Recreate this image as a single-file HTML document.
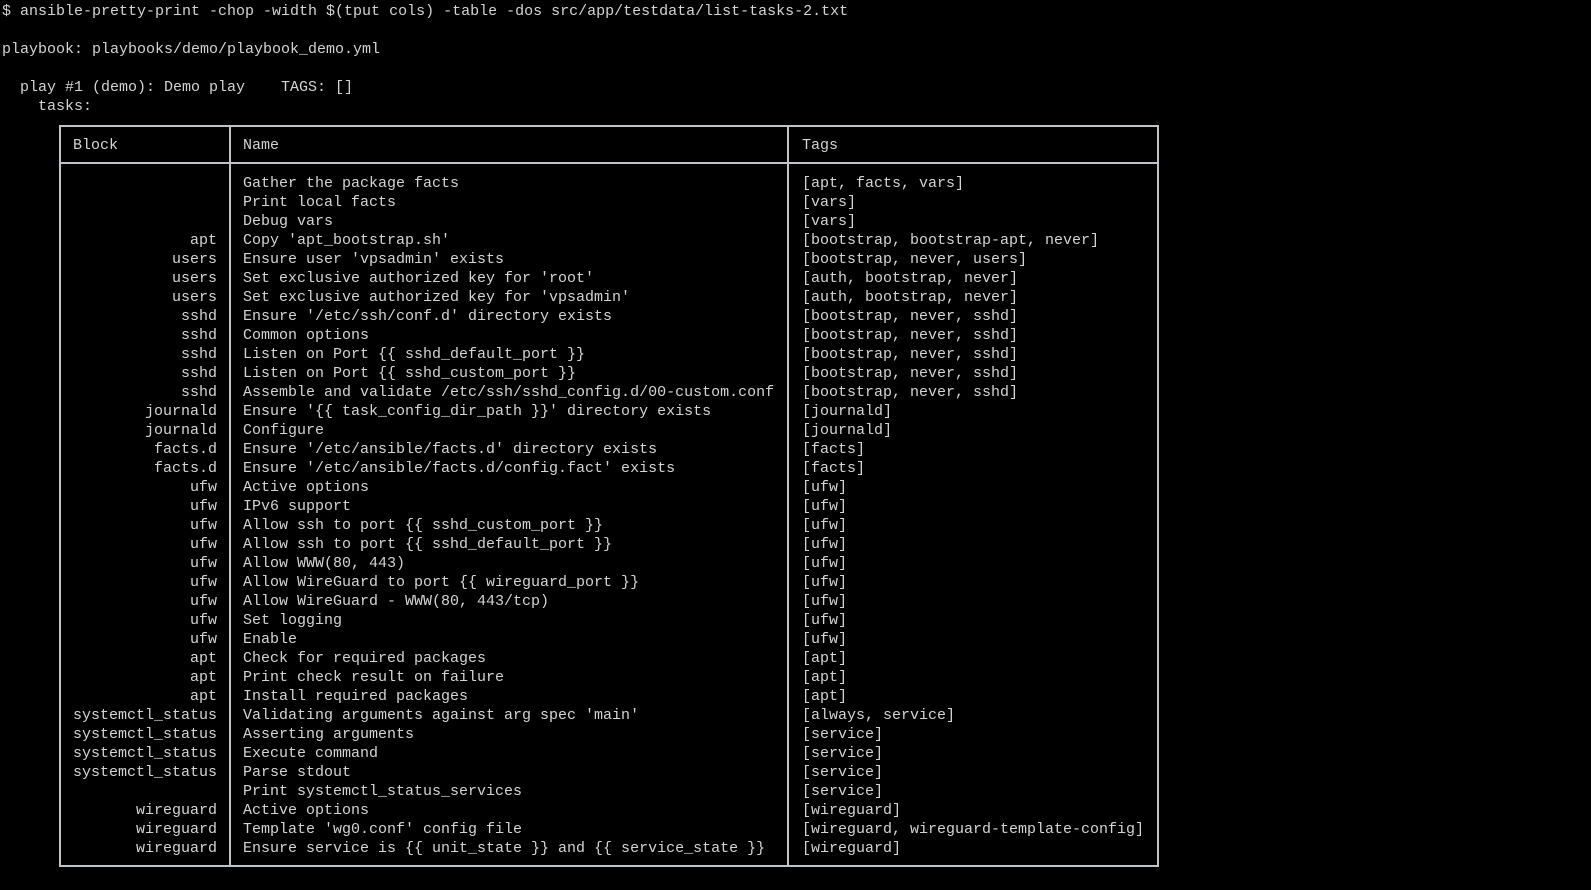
<!DOCTYPE html>
<html><head><meta charset="utf-8"><style>
html,body{margin:0;padding:0;background:#000;width:1591px;height:890px;overflow:hidden}
pre{position:absolute;margin:0;font-family:"Liberation Mono",monospace;font-size:15px;line-height:19px;color:#d4d4d4}
.b{position:absolute;background:#bfc4c8}
</style></head><body>
<pre style="left:2px;top:2px">$ ansible-pretty-print -chop -width $(tput cols) -table -dos src/app/testdata/list-tasks-2.txt

playbook: playbooks/demo/playbook_demo.yml

  play #1 (demo): Demo play    TAGS: []
    tasks:</pre>
<div class="b" style="left:59px;top:125px;width:1100px;height:2px"></div>
<div class="b" style="left:59px;top:162px;width:1100px;height:2px"></div>
<div class="b" style="left:59px;top:865px;width:1100px;height:2px"></div>
<div class="b" style="left:59px;top:125px;width:2px;height:742px"></div>
<div class="b" style="left:229px;top:125px;width:2px;height:742px"></div>
<div class="b" style="left:787px;top:125px;width:2px;height:742px"></div>
<div class="b" style="left:1157px;top:125px;width:2px;height:742px"></div>
<pre style="left:73px;top:136px">Block</pre>
<pre style="left:243px;top:136px">Name</pre>
<pre style="left:802px;top:136px">Tags</pre>
<pre style="left:61px;width:156px;text-align:right;top:174px">

 
 
apt
users
users
users
sshd
sshd
sshd
sshd
sshd
journald
journald
facts.d
facts.d
ufw
ufw
ufw
ufw
ufw
ufw
ufw
ufw
ufw
apt
apt
apt
systemctl_status
systemctl_status
systemctl_status
systemctl_status
 
wireguard
wireguard
wireguard</pre>
<pre style="left:243px;top:174px">Gather the package facts
Print local facts
Debug vars
Copy 'apt_bootstrap.sh'
Ensure user 'vpsadmin' exists
Set exclusive authorized key for 'root'
Set exclusive authorized key for 'vpsadmin'
Ensure '/etc/ssh/conf.d' directory exists
Common options
Listen on Port {{ sshd_default_port }}
Listen on Port {{ sshd_custom_port }}
Assemble and validate /etc/ssh/sshd_config.d/00-custom.conf
Ensure '{{ task_config_dir_path }}' directory exists
Configure
Ensure '/etc/ansible/facts.d' directory exists
Ensure '/etc/ansible/facts.d/config.fact' exists
Active options
IPv6 support
Allow ssh to port {{ sshd_custom_port }}
Allow ssh to port {{ sshd_default_port }}
Allow WWW(80, 443)
Allow WireGuard to port {{ wireguard_port }}
Allow WireGuard - WWW(80, 443/tcp)
Set logging
Enable
Check for required packages
Print check result on failure
Install required packages
Validating arguments against arg spec 'main'
Asserting arguments
Execute command
Parse stdout
Print systemctl_status_services
Active options
Template 'wg0.conf' config file
Ensure service is {{ unit_state }} and {{ service_state }}</pre>
<pre style="left:802px;top:174px">[apt, facts, vars]
[vars]
[vars]
[bootstrap, bootstrap-apt, never]
[bootstrap, never, users]
[auth, bootstrap, never]
[auth, bootstrap, never]
[bootstrap, never, sshd]
[bootstrap, never, sshd]
[bootstrap, never, sshd]
[bootstrap, never, sshd]
[bootstrap, never, sshd]
[journald]
[journald]
[facts]
[facts]
[ufw]
[ufw]
[ufw]
[ufw]
[ufw]
[ufw]
[ufw]
[ufw]
[ufw]
[apt]
[apt]
[apt]
[always, service]
[service]
[service]
[service]
[service]
[wireguard]
[wireguard, wireguard-template-config]
[wireguard]</pre>
</body></html>
